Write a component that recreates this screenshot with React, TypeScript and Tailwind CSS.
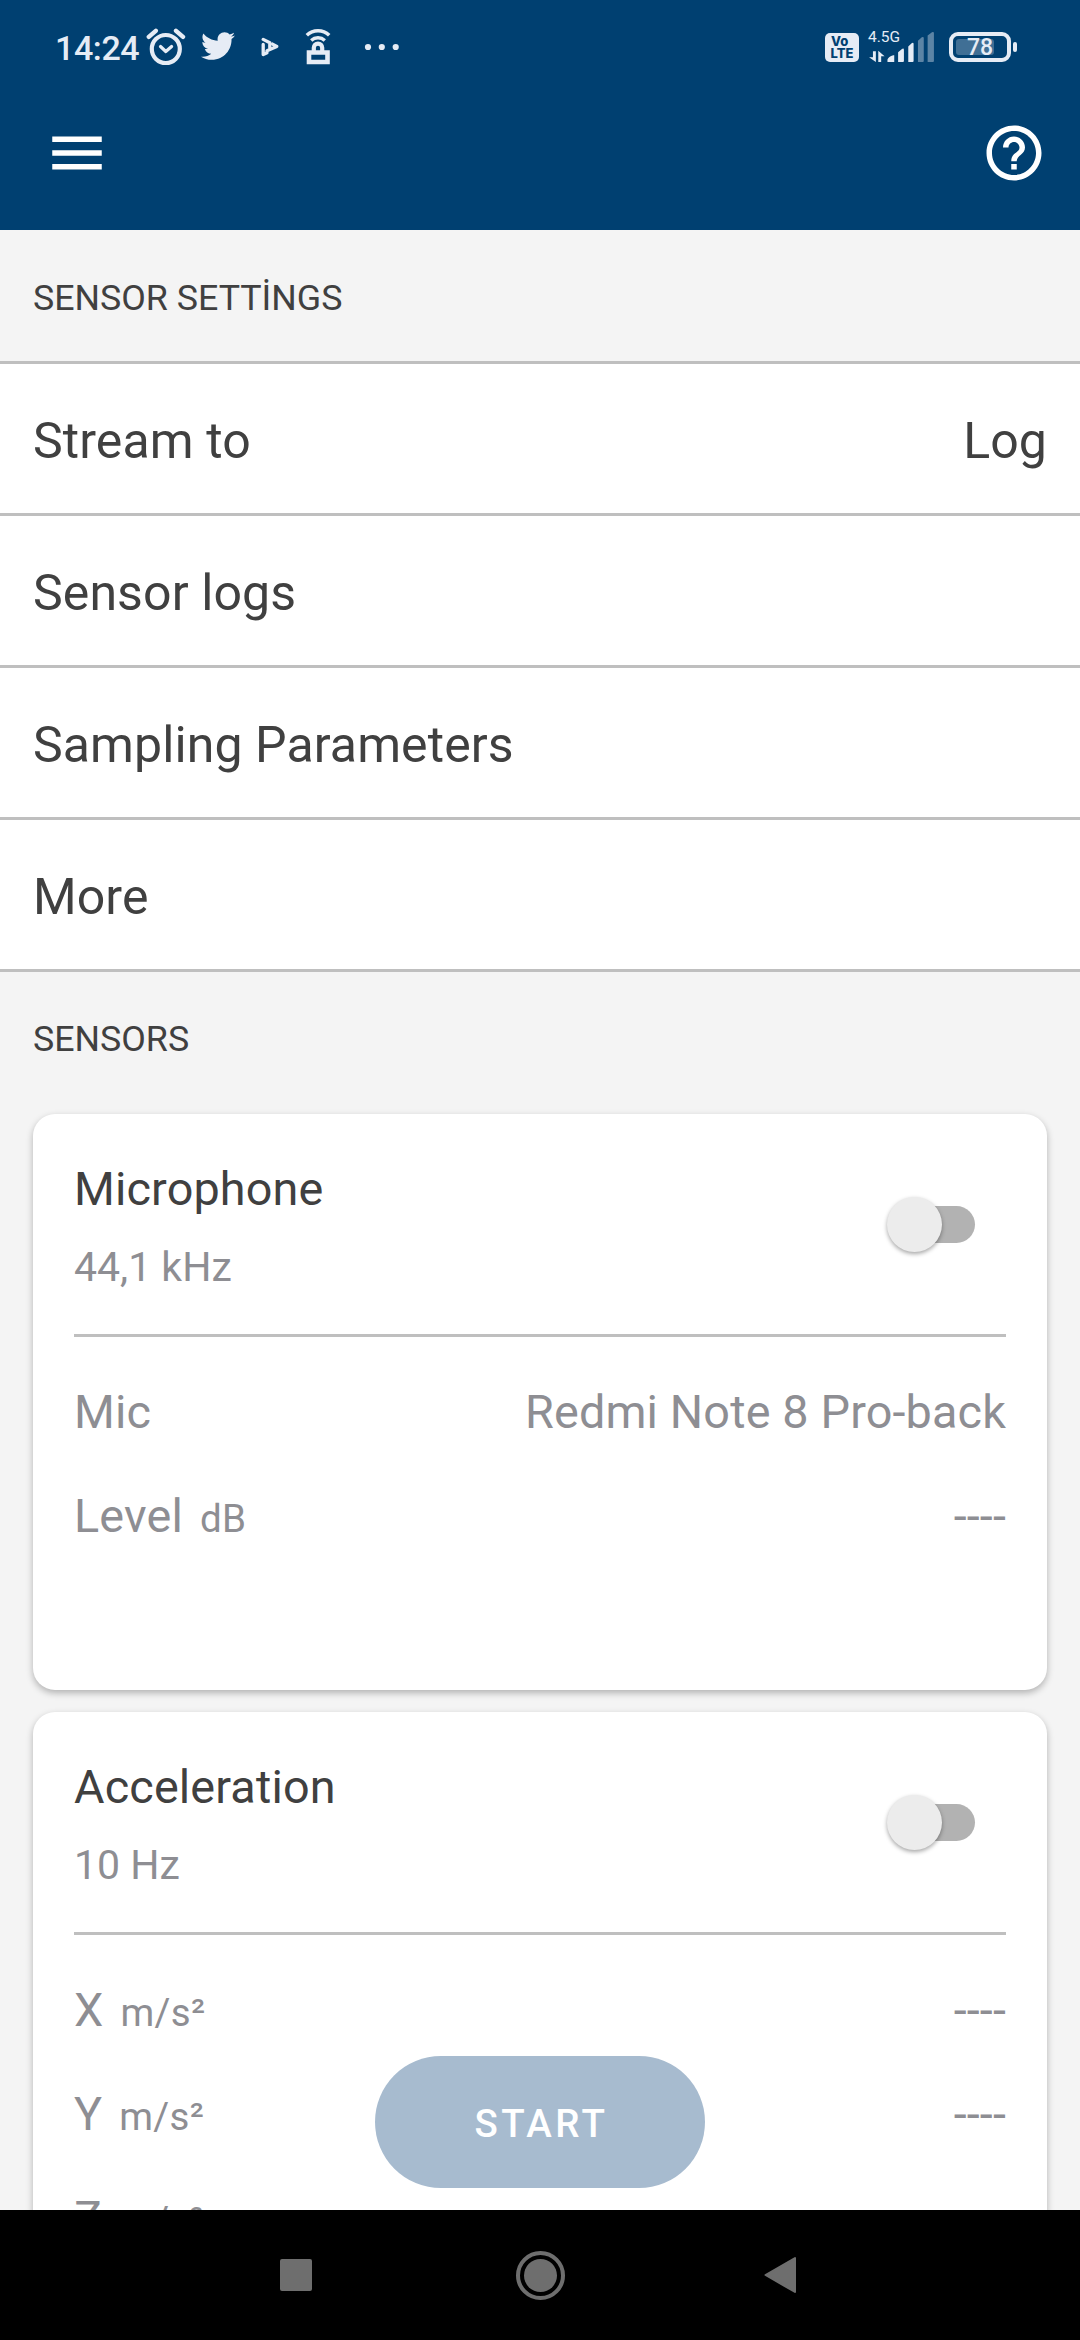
import type { ReactNode } from "react";
import { MdHelpOutline, MdMenu } from "react-icons/md";
import { FaTwitter } from "react-icons/fa";

function StatusBar() {
  return (
    <div className="flex h-[94px] items-center text-[#e6ecf5]">
      <span className="ml-[55px] w-[91px] pt-[2px] text-[34px] font-medium leading-none tracking-[-0.4px]">14:24</span>
      <svg className="h-[38px] w-[40px]" viewBox="0 0 40 38" fill="none" stroke="currentColor">
        <circle cx="19.8" cy="21" r="14" strokeWidth="4.2" />
        <path d="M14.500 18.500l5.300 5 5.800-5" strokeWidth="3.2" strokeLinecap="round" strokeLinejoin="round" />
        <path d="M2.800 8.800L9.800 2.800M37 8.800L30 2.800" strokeWidth="4.400" strokeLinecap="round" />
      </svg>
      <FaTwitter className="-mt-[2px] ml-[15px] size-[34px]" />
      <svg className="ml-[26px] h-[20px] w-[18px]" viewBox="0 0 18 20" fill="none" stroke="currentColor" strokeWidth="3.3" strokeLinejoin="round" strokeLinecap="round">
        <path d="M2.200 7.400v10.200L6 15.700" />
        <path d="M2.200 2.400l6.600 3.400v5" />
        <path d="M6 13.800l9.800-4.300-4.300-2.400" />
      </svg>
      <svg className="ml-[26px] h-[38px] w-[26px]" viewBox="0 0 26 38" fill="none" stroke="currentColor">
        <path d="M1.800 7.200a16.400 16.400 0 0 1 22.400 0" strokeWidth="3.6" />
        <path d="M6.200 12.400a10 10 0 0 1 13.600 0" strokeWidth="3.4" />
        <path d="M8.800 24v-4.200a4.200 4.200 0 0 1 8.400 0V24" strokeWidth="4.200" />
        <path d="M4 24.500h18.500v9.500H4z" strokeWidth="4.600" />
      </svg>
      <svg className="ml-[33px] h-[8px] w-[36px]" viewBox="0 0 36 8" fill="currentColor">
        <circle cx="4" cy="4" r="3.1" />
        <circle cx="17.8" cy="4" r="3.1" />
        <circle cx="31.700" cy="4" r="3.1" />
      </svg>
      <div className="ml-auto flex h-[29px] w-[34px] flex-col items-center justify-center rounded-[5px] bg-[#e6ecf5] font-['Inter'] text-[13px] font-extrabold leading-[12px] text-[#004071]">
        <span className="self-start pl-[6px]">Vo</span>
        <span>LTE</span>
      </div>
      <div className="ml-[9px] flex h-[33px] w-[67px] flex-col">
        <span className="h-[12px] text-[15.5px] leading-[12px]">4.5G</span>
        <svg className="-mt-[11px] h-[30px] w-[67px]" viewBox="0 0 67 31" fill="currentColor">
          <path d="M4 20h3v11L0 26h4zM9.500 31h3v-6h3.500L9.500 19.500z" />
          <path d="M19 31v-2.500q1-3 6-4.500h1v7zM30 31V21l4-3.500q2-1 2 1V30q0 1-1 1zM40.500 31V15l3.500-3.500q2-1 2 1V30q0 1-1 1z" />
          <path opacity=".4" d="M50.500 31V9l4-3.500q2-1 2 1V30q0 1-1 1zM60.500 31V3.500L65 .3q2-1 2 1V30q0 1-1 1z" />
        </svg>
      </div>
      <div className="relative ml-[14px] mr-[2px] flex h-[30px] w-[62px] items-center justify-center rounded-[9px] border-4 border-[#e6ecf5] text-[23px] font-medium leading-none">
        <div className="absolute left-[3px] top-[3px] h-[16px] w-[38px] rounded-[3px] bg-[#406f95]" />
        <span className="relative">78</span>
      </div>
      <div className="mr-[63px] h-[10px] w-[4px] rounded-full bg-[#e6ecf5]" />
    </div>
  );
}

function Header() {
  return (
    <header className="h-[230px] shrink-0 bg-[#004071] text-white">
      <StatusBar />
      <div className="flex h-[118px] items-center justify-between pl-11 pr-[33px]">
        <MdMenu className="size-[66px]" />
        <MdHelpOutline className="size-[66px]" />
      </div>
    </header>
  );
}

function SettingRow({ label, value }: { label: string; value?: string }) {
  return (
    <div className="flex h-[152px] items-center justify-between border-b-[3px] border-[#bfbfbf] bg-white px-[33px] pt-[6px] text-[50px] tracking-[0.1px] text-[#404040]">
      <span>{label}</span>
      <span>{value}</span>
    </div>
  );
}

function Switch() {
  return (
    <div className="relative mr-[31px] h-[55px] w-[88px]">
      <div className="absolute right-0 top-[9px] h-[37px] w-[77px] rounded-full bg-[#b2b2b2]" />
      <div className="absolute left-0 top-0 size-[55px] rounded-full bg-[#ececec] shadow-[0_2px_4px_rgba(0,0,0,0.35)]" />
    </div>
  );
}

function SensorCard({ name, rate, children }: { name: string; rate: string; children: ReactNode }) {
  return (
    <section className="h-[576px] shrink-0 rounded-[22px] bg-white px-[41px] shadow-[0_3px_7px_rgba(0,0,0,0.28)]">
      <div className="flex h-[223px] items-center justify-between border-b-[3px] border-[#bfbfbf]">
        <div className="flex flex-col pt-[3px]">
          <span className="text-[46.75px] leading-[60px] tracking-[0.15px] text-[#404040]">{name}</span>
          <span className="mt-[23px] text-[41px] leading-[50px] text-[#8e8e93]">{rate}</span>
        </div>
        <Switch />
      </div>
      <div className="pt-[23px]">{children}</div>
    </section>
  );
}

function Reading({ label, unit, value }: { label: string; unit?: string; value: string }) {
  return (
    <div className="flex h-[104px] items-center justify-between text-[46.75px] tracking-[0.15px] text-[#8e8e93]">
      <span className="flex items-baseline gap-[17px]">
        {label}
        {unit && <span className="text-[38.5px] tracking-[0.3px]">{unit}</span>}
      </span>
      <span>{value}</span>
    </div>
  );
}

function NavBar() {
  return (
    <nav className="flex h-[130px] shrink-0 items-center bg-black pl-[280px]">
      <div className="size-[32px] rounded-[2px] bg-[#6e6e6e]" />
      <div className="ml-[204px] flex size-[49px] items-center justify-center rounded-full border-4 border-[#6e6e6e]">
        <div className="size-[33px] rounded-full bg-[#6e6e6e]" />
      </div>
      <svg className="ml-[199px] h-[38px] w-[32px]" viewBox="0 0 32 38" fill="#6e6e6e" stroke="#6e6e6e" strokeWidth="2" strokeLinejoin="round">
        <path d="M1.500 19L31 2v34z" />
      </svg>
    </nav>
  );
}

export default function App() {
  return (
    <div className="flex h-[2340px] w-[1080px] flex-col overflow-hidden bg-[#f4f4f4] font-['Roboto',sans-serif]">
      <Header />
      <main className="relative min-h-0 flex-1 overflow-hidden">
        <h2 className="flex h-[134px] items-center border-b-[3px] border-[#bfbfbf] px-[33px] pt-[7px] text-[35.75px] text-[#404040]">
          SENSOR SETTİNGS
        </h2>
        <SettingRow label="Stream to" value="Log" />
        <SettingRow label="Sensor logs" />
        <SettingRow label="Sampling Parameters" />
        <SettingRow label="More" />
        <h2 className="flex h-[142px] items-center px-[33px] pb-[6px] text-[35.75px] text-[#404040]">SENSORS</h2>
        <div className="flex flex-col gap-[22px] px-[33px]">
          <SensorCard name="Microphone" rate="44,1 kHz">
            <Reading label="Mic" value="Redmi Note 8 Pro-back" />
            <Reading label="Level" unit="dB" value="----" />
          </SensorCard>
          <SensorCard name="Acceleration" rate="10 Hz">
            <Reading label="X" unit="m/s²" value="----" />
            <Reading label="Y" unit="m/s²" value="----" />
            <Reading label="Z" unit="m/s²" value="----" />
          </SensorCard>
        </div>
        <button className="absolute bottom-[22px] left-[375px] h-[132px] w-[330px] rounded-full bg-[#a7bbcf] pl-[3px] pt-[3px] text-[38.5px] font-medium tracking-[3.4px] text-white">
          START
        </button>
      </main>
      <NavBar />
    </div>
  );
}
